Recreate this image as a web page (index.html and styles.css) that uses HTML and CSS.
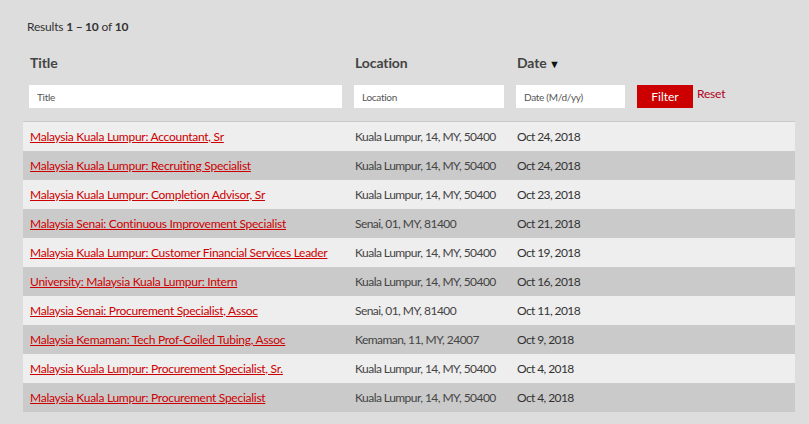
FILE: index.html
```html
<!DOCTYPE html>
<html>
<head>
<meta charset="utf-8">
<link rel="stylesheet" href="styles.css">
</head>
<body>
<div class="page">
  <div class="results">Results <b>1 – 10</b> of <b>10</b></div>
  <div class="heads">
    <div class="h h-title">Title</div>
    <div class="h h-loc">Location</div>
    <div class="h h-date">Date <span class="arrow">▼</span></div>
  </div>
  <form class="filters">
    <input class="in in-title" placeholder="Title">
    <input class="in in-loc" placeholder="Location">
    <input class="in in-date" placeholder="Date (M/d/yy)">
    <button type="button" class="btn">Filter</button>
    <a class="reset" href="#">Reset</a>
  </form>
  <table class="jobs">
    <tbody>
      <tr><td class="c-title"><a href="#">Malaysia Kuala Lumpur: Accountant, Sr</a></td><td class="c-loc">Kuala Lumpur, 14, MY, 50400</td><td class="c-date">Oct 24, 2018</td></tr>
      <tr><td class="c-title"><a href="#">Malaysia Kuala Lumpur: Recruiting Specialist</a></td><td class="c-loc">Kuala Lumpur, 14, MY, 50400</td><td class="c-date">Oct 24, 2018</td></tr>
      <tr><td class="c-title"><a href="#">Malaysia Kuala Lumpur: Completion Advisor, Sr</a></td><td class="c-loc">Kuala Lumpur, 14, MY, 50400</td><td class="c-date">Oct 23, 2018</td></tr>
      <tr><td class="c-title"><a href="#">Malaysia Senai: Continuous Improvement Specialist</a></td><td class="c-loc">Senai, 01, MY, 81400</td><td class="c-date">Oct 21, 2018</td></tr>
      <tr><td class="c-title"><a href="#">Malaysia Kuala Lumpur: Customer Financial Services Leader</a></td><td class="c-loc">Kuala Lumpur, 14, MY, 50400</td><td class="c-date">Oct 19, 2018</td></tr>
      <tr><td class="c-title"><a href="#">University: Malaysia Kuala Lumpur: Intern</a></td><td class="c-loc">Kuala Lumpur, 14, MY, 50400</td><td class="c-date">Oct 16, 2018</td></tr>
      <tr><td class="c-title"><a href="#">Malaysia Senai: Procurement Specialist, Assoc</a></td><td class="c-loc">Senai, 01, MY, 81400</td><td class="c-date">Oct 11, 2018</td></tr>
      <tr><td class="c-title"><a href="#">Malaysia Kemaman: Tech Prof-Coiled Tubing, Assoc</a></td><td class="c-loc">Kemaman, 11, MY, 24007</td><td class="c-date">Oct 9, 2018</td></tr>
      <tr><td class="c-title"><a href="#">Malaysia Kuala Lumpur: Procurement Specialist, Sr.</a></td><td class="c-loc">Kuala Lumpur, 14, MY, 50400</td><td class="c-date">Oct 4, 2018</td></tr>
      <tr><td class="c-title"><a href="#">Malaysia Kuala Lumpur: Procurement Specialist</a></td><td class="c-loc">Kuala Lumpur, 14, MY, 50400</td><td class="c-date">Oct 4, 2018</td></tr>
    </tbody>
  </table>
</div>
</body>
</html>
```
FILE: styles.css
```css
html, body {
  margin: 0;
  padding: 0;
  background: #dddddd;
}
body {
  font-family: Lato, "Liberation Sans", sans-serif;
  color: #333;
}
.page {
  padding: 19px 14px 0 23px;
}
.results {
  font-size: 12px;
  line-height: 16px;
  padding-left: 4px;
  color: #333;
  letter-spacing: -0.2px;
}
.results b {
  font-weight: 700;
}
.heads {
  display: flex;
  margin-top: 18px;
  height: 18px;
  align-items: center;
}
.h {
  font-size: 14px;
  font-weight: 700;
  color: #444;
  letter-spacing: -0.1px;
}
.h-title { width: 325px; padding-left: 7px; box-sizing: border-box; }
.h-loc { width: 162px; padding-left: 7px; box-sizing: border-box; }
.h-date { padding-left: 7px; }
.arrow { font-size: 11px; color: #111; margin-left: -1px; }
.filters {
  display: flex;
  align-items: flex-start;
  margin: 14px 0 0 6px;
  height: 23px;
}
.in {
  height: 23px;
  box-sizing: border-box;
  border: 0;
  background: #fff;
  padding: 0 8px;
  font-family: inherit;
  font-size: 10px;
  color: #333;
  outline: none;
  letter-spacing: -0.3px;
}
.in::placeholder { color: #555; }
.in-title { width: 313px; margin-right: 12px; }
.in-loc { width: 150px; margin-right: 12px; }
.in-date { width: 109px; margin-right: 12px; }
.btn {
  width: 56px;
  height: 23px;
  border: 0;
  background: #cc0000;
  color: #fff;
  font-family: inherit;
  font-size: 12px;
  padding: 0;
  margin-right: 4px;
}
.reset {
  font-size: 12px;
  color: #b00020;
  text-decoration: none;
  line-height: 16px;
  margin-top: 1px;
  letter-spacing: -0.2px;
}
.jobs {
  margin-top: 13px;
  width: 772px;
  border-collapse: collapse;
  border-top: 1px solid #c8c8c8;
  font-size: 12px;
}
.jobs td {
  height: 29px;
  padding: 0 0 0 7px;
  box-sizing: border-box;
  vertical-align: middle;
  white-space: nowrap;
}
.jobs tr:nth-child(odd) { background: #eeeeee; }
.jobs tr:nth-child(even) { background: #cacaca; }
.c-title { width: 325px; letter-spacing: -0.27px; }
.c-loc { width: 162px; color: #444; letter-spacing: -0.55px; }
.c-date { color: #333; letter-spacing: -0.6px; }
.c-title a { color: #cc0000; text-decoration: underline; }
```
